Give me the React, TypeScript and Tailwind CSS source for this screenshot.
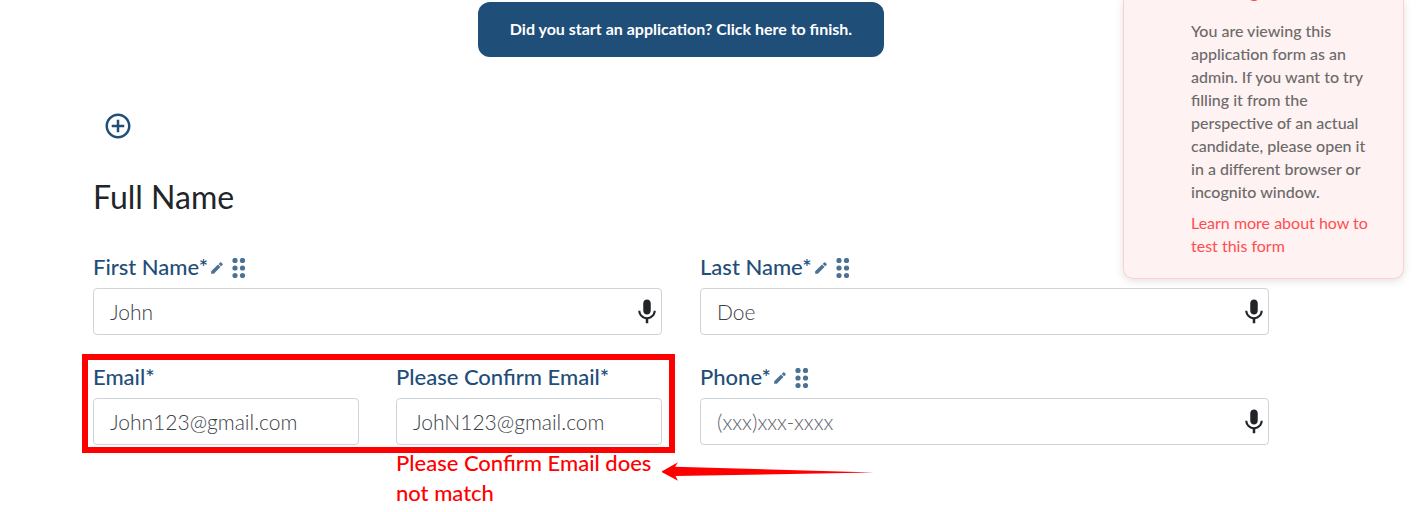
import { useState } from "react";
import { MdAddCircleOutline, MdMic } from "react-icons/md";

interface LabelProps {
  id: string;
  text: string;
  editable?: boolean;
}

function Pencil() {
  return (
    <svg viewBox="0 0 12 12" className="w-3 h-3" fill="currentColor">
      <path d="M0.2 11.8 V9.2 L7 2.5 L9.5 5 L2.8 11.8 Z" />
      <path d="M7.7 1.9 L9.1 0.5 Q9.7 0 10.3 0.5 L11.5 1.7 Q12 2.3 11.5 2.9 L10.1 4.3 Z" />
    </svg>
  );
}

function DragDots() {
  return (
    <svg viewBox="0 0 14 20" className="w-[14px] h-5" fill="currentColor">
      {[2.5, 10, 17.5].map((cy) => (
        <g key={cy}>
          <circle cx="3" cy={cy} r="2.6" />
          <circle cx="10.5" cy={cy} r="2.6" />
        </g>
      ))}
    </svg>
  );
}

function FieldLabel({ id, text, editable }: LabelProps) {
  return (
    <div className="flex items-center h-[30px] mb-[5px] text-[#1f4e79]">
      <label htmlFor={id} className="pb-0.5 font-medium whitespace-nowrap">
        {text}*
      </label>
      {editable && (
        <>
          <button type="button" aria-label={`Edit ${text}`} className="ml-[3px] opacity-80">
            <Pencil />
          </button>
          <button type="button" aria-label={`Move ${text}`} className="ml-[9px] opacity-80 cursor-move">
            <DragDots />
          </button>
        </>
      )}
    </div>
  );
}

interface FieldProps extends LabelProps {
  type?: string;
  defaultValue?: string;
  placeholder?: string;
  mic?: boolean;
  error?: string;
}

function Field({ id, text, editable, type = "text", defaultValue, placeholder, mic, error }: FieldProps) {
  const [value, setValue] = useState(defaultValue ?? "");

  return (
    <div className="flex-1 min-w-0">
      <FieldLabel id={id} text={text} editable={editable} />
      <div className="relative">
        <input
          id={id}
          type={type}
          value={value}
          onChange={(e) => setValue(e.target.value)}
          placeholder={placeholder}
          className="block w-full h-[47px] px-4 bg-white border border-[#ced4da] rounded text-[21px] font-light text-[#3b4148] placeholder:text-[#5c636a] focus:outline-none focus:border-[#1f4e79]"
        />
        {mic && (
          <button type="button" aria-label={`Dictate ${text}`} className="absolute inset-y-0 right-0 flex items-center text-[#212529]">
            <MdMic className="w-[30px] h-[30px]" />
          </button>
        )}
      </div>
      {error && <p className="mt-[3px] font-medium text-[#ff0000]">{error}</p>}
    </div>
  );
}

function AdminNotice() {
  return (
    <aside className="absolute top-0 right-4 w-[281px] pl-[67px] pr-6 pb-[21px] bg-[#fff2f2] border border-t-0 border-[#fcd0d0] rounded-b-[10px] shadow-[0_2px_8px_rgba(0,0,0,0.12)] text-[16px] leading-[23px]">
      <h2 className="-mt-5 mb-[17px] text-lg leading-[22px] font-bold text-[#ff4d4f]">Warning</h2>
      <p className="mb-2 font-medium text-[#6b6b6b]">
        You are viewing this application form as an admin. If you want to try filling it from the perspective of an
        actual candidate, please open it in a different browser or incognito window.
      </p>
      <a href="#test-form" className="block text-[#ff4d4f]">
        Learn more about how to test this form
      </a>
    </aside>
  );
}

export default function App() {
  return (
    <div className="relative overflow-hidden min-h-screen bg-white font-['Lato',sans-serif] text-[22px] leading-[30px]">
      <form className="pt-[2px] pl-[93px] pr-[151px]">
        <div className="flex justify-center">
          <button type="button" className="h-[55px] px-8 pb-0.5 rounded-xl bg-[#1f4e79] text-white text-[16px] font-bold">
            Did you start an application? Click here to finish.
          </button>
        </div>

        <button type="button" aria-label="Add section" className="block mt-[54px] ml-[10px] text-[#1f4e79]">
          <MdAddCircleOutline className="w-[30px] h-[30px]" />
        </button>

        <h1 className="mt-9 mb-9 text-[32px] leading-10 text-[#212529]">Full Name</h1>

        <div className="flex gap-[38px] mb-7">
          <Field id="first-name" text="First Name" editable defaultValue="John" mic />
          <Field id="last-name" text="Last Name" editable defaultValue="Doe" mic />
        </div>

        <div className="flex items-start gap-[38px]">
          <div className="relative flex-1 min-w-0 flex items-start gap-[37px]">
            <Field id="email" text="Email" type="email" defaultValue="John123@gmail.com" />
            <Field
              id="confirm-email"
              text="Please Confirm Email"
              type="email"
              defaultValue="JohN123@gmail.com"
              error="Please Confirm Email does not match"
            />
            {/* Highlight around the two email fields */}
            <div className="absolute -top-[9px] -left-[11px] -right-[13px] h-[99px] border-6 border-[#ff0000] pointer-events-none" />
            <svg
              viewBox="0 0 214 20"
              className="absolute top-[99px] left-full w-[214px] h-5 pointer-events-none"
              fill="#ff0000"
            >
              <path d="M-1 9.8 L16 0.3 L13 4.8 L212 10.5 L13.5 14 L16 18.8 Z" overflow="visible" />
            </svg>
          </div>
          <Field id="phone" text="Phone" type="tel" editable placeholder="(xxx)xxx-xxxx" mic />
        </div>
      </form>

      <AdminNotice />
    </div>
  );
}
